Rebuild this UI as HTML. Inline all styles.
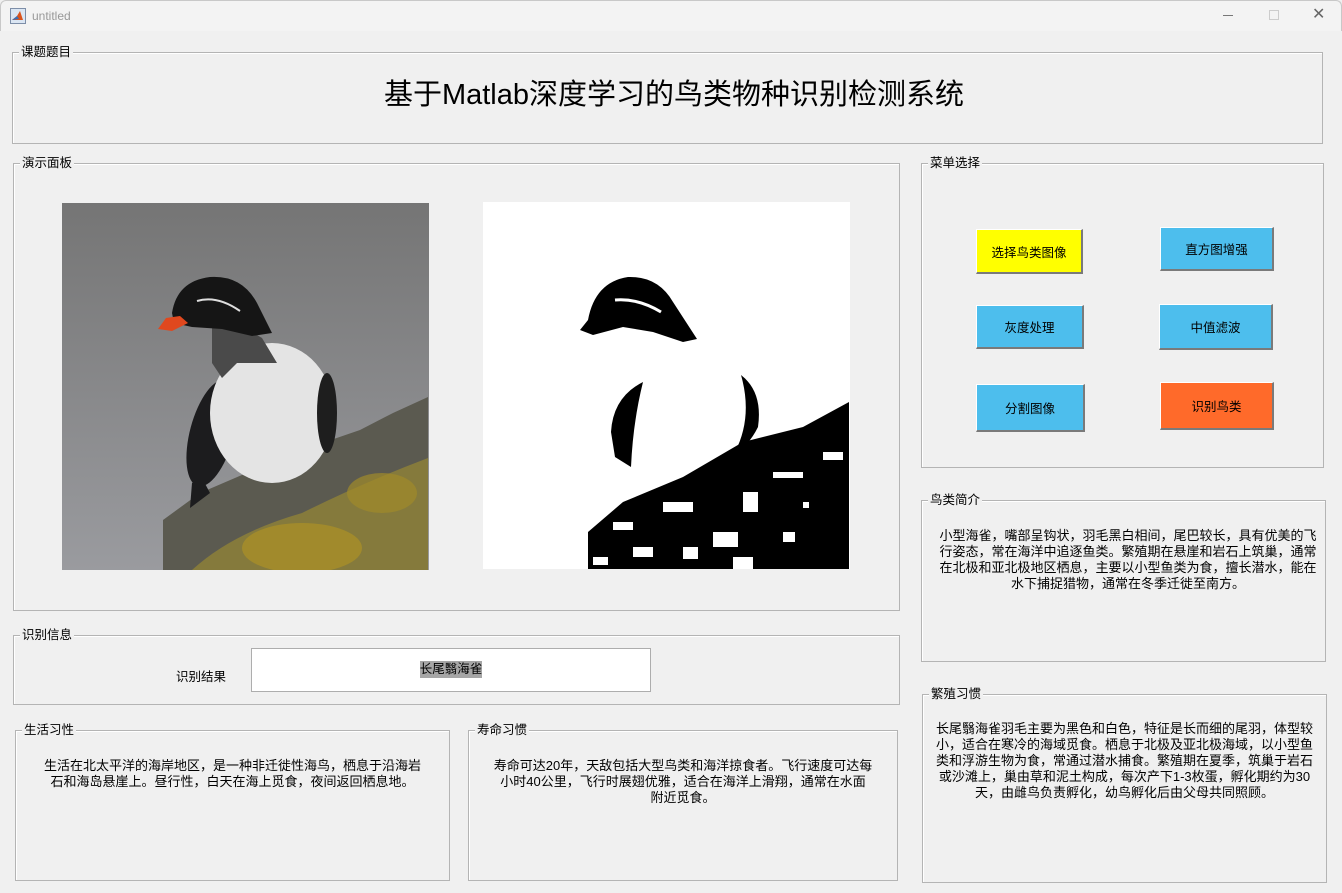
<!DOCTYPE html>
<html><head><meta charset="utf-8"><style>
*{margin:0;padding:0;box-sizing:border-box}
body{width:1342px;height:893px;background:#f0f0f0;font-family:"Liberation Sans","Noto Sans CJK SC",sans-serif;color:#000;position:relative;overflow:hidden}
.tb{position:absolute;left:0;top:0;width:1342px;height:31px;background:#f3f3f3;border:1px solid #c8c8c8;border-bottom:none;border-radius:6px 6px 0 0}
.tb .t{position:absolute;left:31px;top:8px;font-size:12px;color:#999}
.p{position:absolute;border:1px solid #b4b4b4;box-shadow:inset 1px 1px 0 #fff}
.p .l{position:absolute;top:-9px;left:6px;background:#f0f0f0;padding:0 2px;font-size:12.5px;line-height:16px}
.btn{position:absolute;font-size:12.5px;display:flex;align-items:center;justify-content:center;border-top:1px solid #fff;border-left:1px solid #fff;border-right:2px solid #7a7a7a;border-bottom:2px solid #7a7a7a;background:#4dbeed}
.tx{position:absolute;font-size:13px;line-height:16px;text-align:center}
</style></head><body>
<div class="tb"><svg style="position:absolute;left:9px;top:7px" width="16" height="16"><rect x="0.5" y="0.5" width="15" height="15" fill="#dbe6f3" stroke="#7d8ea8"/><path d="M2 12 L7 8 L10 3 L13 12 Z" fill="#d9541e"/><path d="M2 12 L7 8 L9 11Z" fill="#3b6fb6"/></svg><span class="t">untitled</span>
<span style="position:absolute;left:1222px;top:14px;width:10px;border-top:1px solid #777"></span>
<span style="position:absolute;left:1268px;top:9px;width:10px;height:10px;border:1px solid #ccc"></span>
<span style="position:absolute;left:1311px;top:3px;font-size:16px;color:#666">✕</span></div>

<div class="p" style="left:12px;top:52px;width:1311px;height:92px"><span class="l">课题题目</span></div>
<div style="position:absolute;left:0;top:77px;width:1348px;text-align:center;font-size:29px;line-height:36px">基于Matlab深度学习的鸟类物种识别检测系统</div>

<div class="p" style="left:13px;top:163px;width:887px;height:448px"><span class="l">演示面板</span></div>
<svg style="position:absolute;left:62px;top:203px" width="367" height="367">
<defs><linearGradient id="bg" x1="0" y1="0" x2="0" y2="1"><stop offset="0" stop-color="#757575"/><stop offset="1" stop-color="#9a9b9f"/></linearGradient></defs>
<rect width="367" height="367" fill="url(#bg)"/>
<path d="M101 367 L101 317 L138 290 L231 250 L298 227 L331 210 L366 194 L366 367Z" fill="#5b5a50"/>
<path d="M130 367 Q170 330 240 310 Q300 280 366 255 L366 367Z" fill="#857a3c"/>
<ellipse cx="240" cy="345" rx="60" ry="25" fill="#a88e28" opacity=".8"/>
<ellipse cx="320" cy="290" rx="35" ry="20" fill="#a08a2a" opacity=".7"/>
<ellipse cx="150" cy="230" rx="22" ry="55" fill="#1c1c1e" transform="rotate(15 150 230)"/>
<ellipse cx="210" cy="210" rx="62" ry="70" fill="#e4e4e4"/>
<ellipse cx="265" cy="210" rx="10" ry="40" fill="#1e1e1e"/>
<path d="M150 125 L175 120 L200 135 L215 160 L175 160 L160 175 L150 160Z" fill="#4a4a4a"/>
<path d="M110 110 Q115 78 148 74 Q180 72 195 100 L210 130 L190 133 L160 126 L130 124 L112 120Z" fill="#151515"/>
<path d="M135 98 Q155 92 178 108" stroke="#ddd" stroke-width="2" fill="none"/>
<path d="M96 126 L104 115 L118 113 L126 120 L110 128Z" fill="#e0481e"/>
<path d="M130 280 L140 275 L148 290 L128 305Z" fill="#1c1c1e"/>
</svg>
<svg style="position:absolute;left:483px;top:202px" width="367" height="367">
<rect width="367" height="367" fill="#fff"/>
<path d="M97 128 L105 118 Q112 80 145 75 Q175 74 190 100 L214 137 L200 140 L170 130 L140 125 L110 133Z" fill="#000"/>
<path d="M132 98 Q155 96 178 110" stroke="#fff" stroke-width="3" fill="none"/>
<path d="M128 230 Q130 195 160 180 Q150 220 148 265 L132 255Z" fill="#000"/>
<path d="M258 173 Q280 190 275 225 Q265 245 252 250 Q270 215 258 173Z" fill="#000"/>
<path d="M105 367 L105 330 L140 300 L200 275 L260 240 L320 225 L366 200 L366 367Z" fill="#000"/>
<g fill="#fff"><rect x="130" y="320" width="20" height="8"/><rect x="180" y="300" width="30" height="10"/><rect x="230" y="330" width="25" height="15"/><rect x="200" y="345" width="15" height="12"/><rect x="290" y="270" width="30" height="6"/><rect x="320" y="300" width="6" height="6"/><rect x="150" y="345" width="20" height="10"/><rect x="260" y="290" width="15" height="20"/><rect x="340" y="250" width="20" height="8"/><rect x="110" y="355" width="15" height="8"/><rect x="250" y="355" width="20" height="12"/><rect x="300" y="330" width="12" height="10"/></g>
</svg>

<div class="p" style="left:921px;top:163px;width:403px;height:305px"><span class="l">菜单选择</span></div>
<div class="btn" style="left:976px;top:229px;width:107px;height:45px;background:#ffff00">选择鸟类图像</div>
<div class="btn" style="left:1160px;top:227px;width:114px;height:44px">直方图增强</div>
<div class="btn" style="left:976px;top:305px;width:108px;height:44px">灰度处理</div>
<div class="btn" style="left:1159px;top:304px;width:114px;height:46px">中值滤波</div>
<div class="btn" style="left:976px;top:384px;width:109px;height:48px">分割图像</div>
<div class="btn" style="left:1160px;top:382px;width:114px;height:48px;background:#ff6a2a">识别鸟类</div>

<div class="p" style="left:921px;top:500px;width:405px;height:162px"><span class="l">鸟类简介</span></div>
<div class="tx" style="left:926px;top:528px;width:404px">小型海雀，嘴部呈钩状，羽毛黑白相间，尾巴较长，具有优美的飞<br>行姿态，常在海洋中追逐鱼类。繁殖期在悬崖和岩石上筑巢，通常<br>在北极和亚北极地区栖息，主要以小型鱼类为食，擅长潜水，能在<br>水下捕捉猎物，通常在冬季迁徙至南方。</div>

<div class="p" style="left:922px;top:694px;width:405px;height:189px"><span class="l">繁殖习惯</span></div>
<div class="tx" style="left:922px;top:721px;width:405px">长尾翳海雀羽毛主要为黑色和白色，特征是长而细的尾羽，体型较<br>小，适合在寒冷的海域觅食。栖息于北极及亚北极海域，以小型鱼<br>类和浮游生物为食，常通过潜水捕食。繁殖期在夏季，筑巢于岩石<br>或沙滩上，巢由草和泥土构成，每次产下1-3枚蛋，孵化期约为30<br>天，由雌鸟负责孵化，幼鸟孵化后由父母共同照顾。</div>

<div class="p" style="left:13px;top:635px;width:887px;height:70px"><span class="l">识别信息</span></div>
<div style="position:absolute;left:176px;top:666px;font-size:12.5px">识别结果</div>
<div style="position:absolute;left:251px;top:648px;width:400px;height:44px;background:#fff;border:1px solid #adadad;text-align:center"><span style="display:inline-block;margin-top:12px;background:#a6a6a6;font-size:12.5px;line-height:17px">长尾翳海雀</span></div>

<div class="p" style="left:15px;top:730px;width:435px;height:151px"><span class="l">生活习性</span></div>
<div class="tx" style="left:15px;top:758px;width:435px">生活在北太平洋的海岸地区，是一种非迁徙性海鸟，栖息于沿海岩<br>石和海岛悬崖上。昼行性，白天在海上觅食，夜间返回栖息地。</div>
<div class="p" style="left:468px;top:730px;width:430px;height:151px"><span class="l">寿命习惯</span></div>
<div class="tx" style="left:468px;top:758px;width:430px">寿命可达20年，天敌包括大型鸟类和海洋掠食者。飞行速度可达每<br>小时40公里，飞行时展翅优雅，适合在海洋上滑翔，通常在水面<br>附近觅食。</div>
</body></html>
